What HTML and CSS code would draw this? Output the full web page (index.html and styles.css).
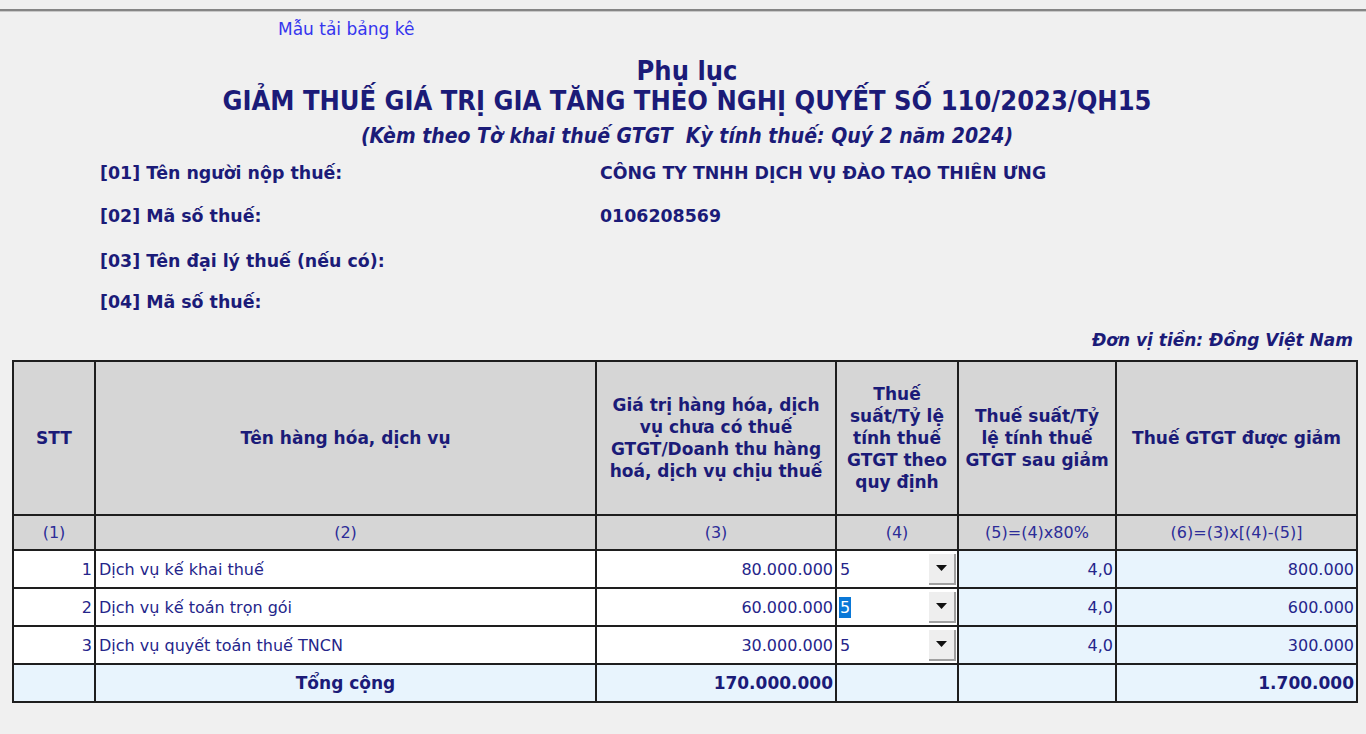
FILE: index.html
```html
<!DOCTYPE html>
<html lang="vi">
<head>
<meta charset="utf-8">
<title>Phụ lục</title>
<link rel="stylesheet" href="styles.css">
</head>
<body>
<div class="topbar"></div>
<div class="linkrow"><a class="tpl-link" href="#">Mẫu tải bảng kê</a></div>
<div class="heading">
  <div class="h-sub">Phụ lục</div>
  <div class="h-main">GIẢM THUẾ GIÁ TRỊ GIA TĂNG THEO NGHỊ QUYẾT SỐ 110/2023/QH15</div>
  <div class="h-note">(Kèm theo Tờ khai thuế GTGT&nbsp; Kỳ tính thuế: Quý 2 năm 2024)</div>
</div>
<div class="info">
  <div class="info-row"><span class="lbl">[01] Tên người nộp thuế:</span><span class="val">CÔNG TY TNHH DỊCH VỤ ĐÀO TẠO THIÊN ƯNG</span></div>
  <div class="info-row"><span class="lbl">[02] Mã số thuế:</span><span class="val">0106208569</span></div>
  <div class="info-row"><span class="lbl">[03] Tên đại lý thuế (nếu có):</span><span class="val"></span></div>
  <div class="info-row"><span class="lbl">[04] Mã số thuế:</span><span class="val"></span></div>
</div>
<div class="unit">Đơn vị tiền: Đồng Việt Nam</div>
<table class="grid">
  <colgroup>
    <col class="c1"><col class="c2"><col class="c3"><col class="c4"><col class="c5"><col class="c6">
  </colgroup>
  <thead>
    <tr class="hrow">
      <th>STT</th>
      <th>Tên hàng hóa, dịch vụ</th>
      <th>Giá trị hàng hóa, dịch<br>vụ chưa có thuế<br>GTGT/Doanh thu hàng<br>hoá, dịch vụ chịu thuế</th>
      <th>Thuế<br>suất/Tỷ lệ<br>tính thuế<br>GTGT theo<br>quy định</th>
      <th>Thuế suất/Tỷ<br>lệ tính thuế<br>GTGT sau giảm</th>
      <th>Thuế GTGT được giảm</th>
    </tr>
    <tr class="nrow">
      <td>(1)</td><td>(2)</td><td>(3)</td><td>(4)</td><td>(5)=(4)x80%</td><td>(6)=(3)x[(4)-(5)]</td>
    </tr>
  </thead>
  <tbody>
    <tr class="drow">
      <td class="num">1</td>
      <td class="txt">Dịch vụ kế khai thuế</td>
      <td class="num">80.000.000</td>
      <td class="combo"><div class="cb"><span class="cb-val">5</span><span class="cb-btn"><svg width="11" height="6" viewBox="0 0 11 6"><path d="M0 0H11L5.5 6Z" fill="#111"/></svg></span></div></td>
      <td class="num calc">4,0</td>
      <td class="num calc">800.000</td>
    </tr>
    <tr class="drow">
      <td class="num">2</td>
      <td class="txt">Dịch vụ kế toán trọn gói</td>
      <td class="num">60.000.000</td>
      <td class="combo"><div class="cb"><span class="cb-val sel">5</span><span class="cb-btn"><svg width="11" height="6" viewBox="0 0 11 6"><path d="M0 0H11L5.5 6Z" fill="#111"/></svg></span></div></td>
      <td class="num calc">4,0</td>
      <td class="num calc">600.000</td>
    </tr>
    <tr class="drow">
      <td class="num">3</td>
      <td class="txt">Dịch vụ quyết toán thuế TNCN</td>
      <td class="num">30.000.000</td>
      <td class="combo"><div class="cb"><span class="cb-val">5</span><span class="cb-btn"><svg width="11" height="6" viewBox="0 0 11 6"><path d="M0 0H11L5.5 6Z" fill="#111"/></svg></span></div></td>
      <td class="num calc">4,0</td>
      <td class="num calc">300.000</td>
    </tr>
    <tr class="trow">
      <td></td>
      <td class="tot-lbl">Tổng cộng</td>
      <td class="num b">170.000.000</td>
      <td></td>
      <td></td>
      <td class="num b">1.700.000</td>
    </tr>
  </tbody>
</table>
</body>
</html>
```
FILE: styles.css
```css
html, body {
  margin: 0;
  padding: 0;
  background: #f0f0f0;
  font-family: "DejaVu Sans", Verdana, sans-serif;
  color: #1b1b78;
}
.topbar {
  height: 9px;
  border-bottom: 2px solid #858585;
  box-shadow: 0 1px 0 #c8c8c8;
}
.linkrow {
  padding: 8px 0 0 278px;
  height: 22px;
  line-height: 20px;
}
.tpl-link {
  font-family: "DejaVu Sans", sans-serif;
  font-size: 17px;
  color: #3535ee;
  text-decoration: none;
}
.heading {
  text-align: center;
  margin-top: 15px;
  padding-left: 8px;
  font-family: "DejaVu Sans Condensed", "DejaVu Sans", sans-serif;
  font-weight: bold;
  color: #1b1b78;
}
.h-sub {
  font-size: 27px;
  line-height: 30px;
}
.h-main {
  font-size: 27px;
  line-height: 30px;
}
.h-note {
  margin-top: 5px;
  font-size: 21px;
  font-style: italic;
  line-height: 30px;
}
.info {
  margin-top: 12px;
  padding-left: 100px;
  font-family: "DejaVu Sans", sans-serif;
  font-weight: bold;
  font-size: 17.4px;
  line-height: 20px;
}
.info-row {
  display: grid;
  grid-template-columns: 500px 1fr;
  height: 43px;
  align-items: start;
}
.info-row:nth-child(2) { height: 45px; }
.info-row:nth-child(3) { height: 41px; }
.info-row:nth-child(4) { height: 38px; }
.unit {
  text-align: right;
  padding-right: 13px;
  margin-bottom: 10px;
  font-family: "DejaVu Sans", sans-serif;
  font-weight: bold;
  font-style: italic;
  font-size: 17px;
  line-height: 20px;
  height: 20px;
}
.grid {
  margin: 0 0 0 12px;
  width: 1344px;
  border-collapse: collapse;
  table-layout: fixed;
  font-family: "DejaVu Sans", sans-serif;
  font-size: 16px;
}
.c1 { width: 82px; }
.c2 { width: 501px; }
.c3 { width: 240px; }
.c4 { width: 122px; }
.c5 { width: 158px; }
.c6 { width: 241px; }
.grid th, .grid td {
  border: 2px solid #1e1e1e;
  padding: 0;
}
.hrow th {
  background: #d6d6d6;
  height: 152px;
  font-weight: bold;
  font-size: 17px;
  line-height: 22px;
  text-align: center;
  vertical-align: middle;
  padding: 0;
  white-space: nowrap;
}
.nrow td {
  background: #d6d6d6;
  height: 33px;
  text-align: center;
  color: #2c2c98;
}
.drow td {
  background: #fff;
  height: 36px;
  color: #25258a;
}
.drow td.calc { background: #e8f4fd; }
.num { text-align: right; padding-right: 2px !important; }
.txt { text-align: left; padding-left: 3px !important; }
.combo { padding: 0 !important; }
.cb {
  display: flex;
  align-items: center;
  height: 36px;
}
.cb-val {
  margin-left: 2px;
  padding: 0 1px;
  line-height: 21px;
}
.cb-val.sel {
  background: #0a78d7;
  color: #fff;
}
.cb-btn {
  margin-left: auto;
  margin-right: 1px;
  width: 27px;
  height: 31px;
  background: #eeeeee;
  border-right: 2px solid #a0a0a0;
  border-bottom: 2px solid #a0a0a0;
  box-sizing: border-box;
  display: flex;
  align-items: center;
  justify-content: center;
}
.trow td {
  background: #e8f4fd;
  height: 36px;
}
.tot-lbl {
  text-align: center;
  font-weight: bold;
  font-size: 17px;
}
.b { font-weight: bold; font-size: 17px; }
```
